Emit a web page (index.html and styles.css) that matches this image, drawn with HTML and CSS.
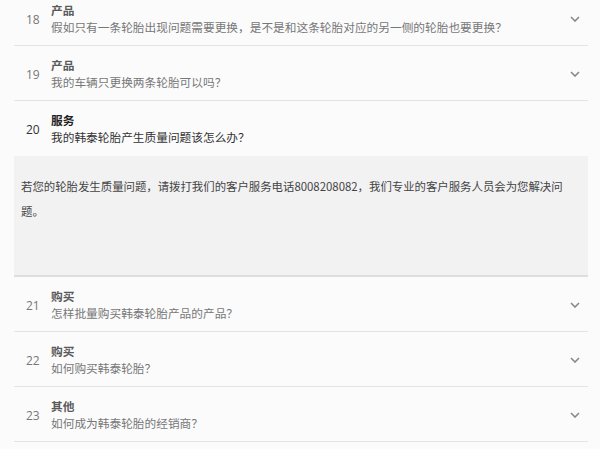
FILE: index.html
```html
<!DOCTYPE html>
<html lang="zh-CN">
<head>
  <meta charset="UTF-8">
  <title>常见问题</title>
  <link rel="stylesheet" href="styles.css">
</head>
<body>

  <div class="faq">

    <div class="item">
      <span class="num">18</span>
      <div class="text">
        <div class="type">产品</div>
        <div class="question">假如只有一条轮胎出现问题需要更换，是不是和这条轮胎对应的另一侧的轮胎也要更换？</div>
      </div>
      <svg class="arrow" width="10" height="6" viewBox="0 0 10 6"><path d="M1 1 L5 5 L9 1" /></svg>
    </div>

    <div class="item">
      <span class="num">19</span>
      <div class="text">
        <div class="type">产品</div>
        <div class="question">我的车辆只更换两条轮胎可以吗？</div>
      </div>
      <svg class="arrow" width="10" height="6" viewBox="0 0 10 6"><path d="M1 1 L5 5 L9 1" /></svg>
    </div>

    <div class="item open">
      <span class="num">20</span>
      <div class="text">
        <div class="type">服务</div>
        <div class="question">我的韩泰轮胎产生质量问题该怎么办？</div>
      </div>
    </div>
    <div class="answer">
      若您的轮胎发生质量问题，请拨打我们的客户服务电话8008208082，我们专业的客户服务人员会为您解决问题。
    </div>

    <div class="item">
      <span class="num">21</span>
      <div class="text">
        <div class="type">购买</div>
        <div class="question">怎样批量购买韩泰轮胎产品的产品？</div>
      </div>
      <svg class="arrow" width="10" height="6" viewBox="0 0 10 6"><path d="M1 1 L5 5 L9 1" /></svg>
    </div>

    <div class="item">
      <span class="num">22</span>
      <div class="text">
        <div class="type">购买</div>
        <div class="question">如何购买韩泰轮胎？</div>
      </div>
      <svg class="arrow" width="10" height="6" viewBox="0 0 10 6"><path d="M1 1 L5 5 L9 1" /></svg>
    </div>

    <div class="item">
      <span class="num">23</span>
      <div class="text">
        <div class="type">其他</div>
        <div class="question">如何成为韩泰轮胎的经销商？</div>
      </div>
      <svg class="arrow" width="10" height="6" viewBox="0 0 10 6"><path d="M1 1 L5 5 L9 1" /></svg>
    </div>

  </div>

</body>
</html>
```

FILE: styles.css
```css
body {
  margin: 0;
  background: #fbfbfc;
  font-family: "Noto Sans CJK SC", "Noto Sans", sans-serif;
  color: #666;
}

.faq {
  width: 574px;
  margin: -9px 0 0 14px;
}

.item {
  display: flex;
  align-items: center;
  padding: 11px 8px 9px 12px;
  border-bottom: 1px solid #e4e4e6;
}

.item.open {
  border-bottom: none;
  padding-bottom: 10px;
}

.num {
  width: 25px;
  font-family: "Open Sans", sans-serif;
  font-size: 12px;
  color: #777;
}

.text {
  flex: 1;
}

.type {
  font-size: 11.7px;
  line-height: 16px;
  font-weight: bold;
  color: #5a5a5a;
}

.question {
  font-size: 11.7px;
  line-height: 18px;
  color: #777;
}

.open .num {
  color: #333;
}

.open .type {
  color: #222;
}

.open .question {
  color: #333;
}

.arrow path {
  fill: none;
  stroke: #888;
  stroke-width: 1.6;
}

.answer {
  background: #f2f2f3;
  padding: 18px 16px 51px 7px;
  font-size: 11.4px;
  line-height: 25px;
  color: #444;
  border-bottom: 2px solid #dedee0;
}
```
